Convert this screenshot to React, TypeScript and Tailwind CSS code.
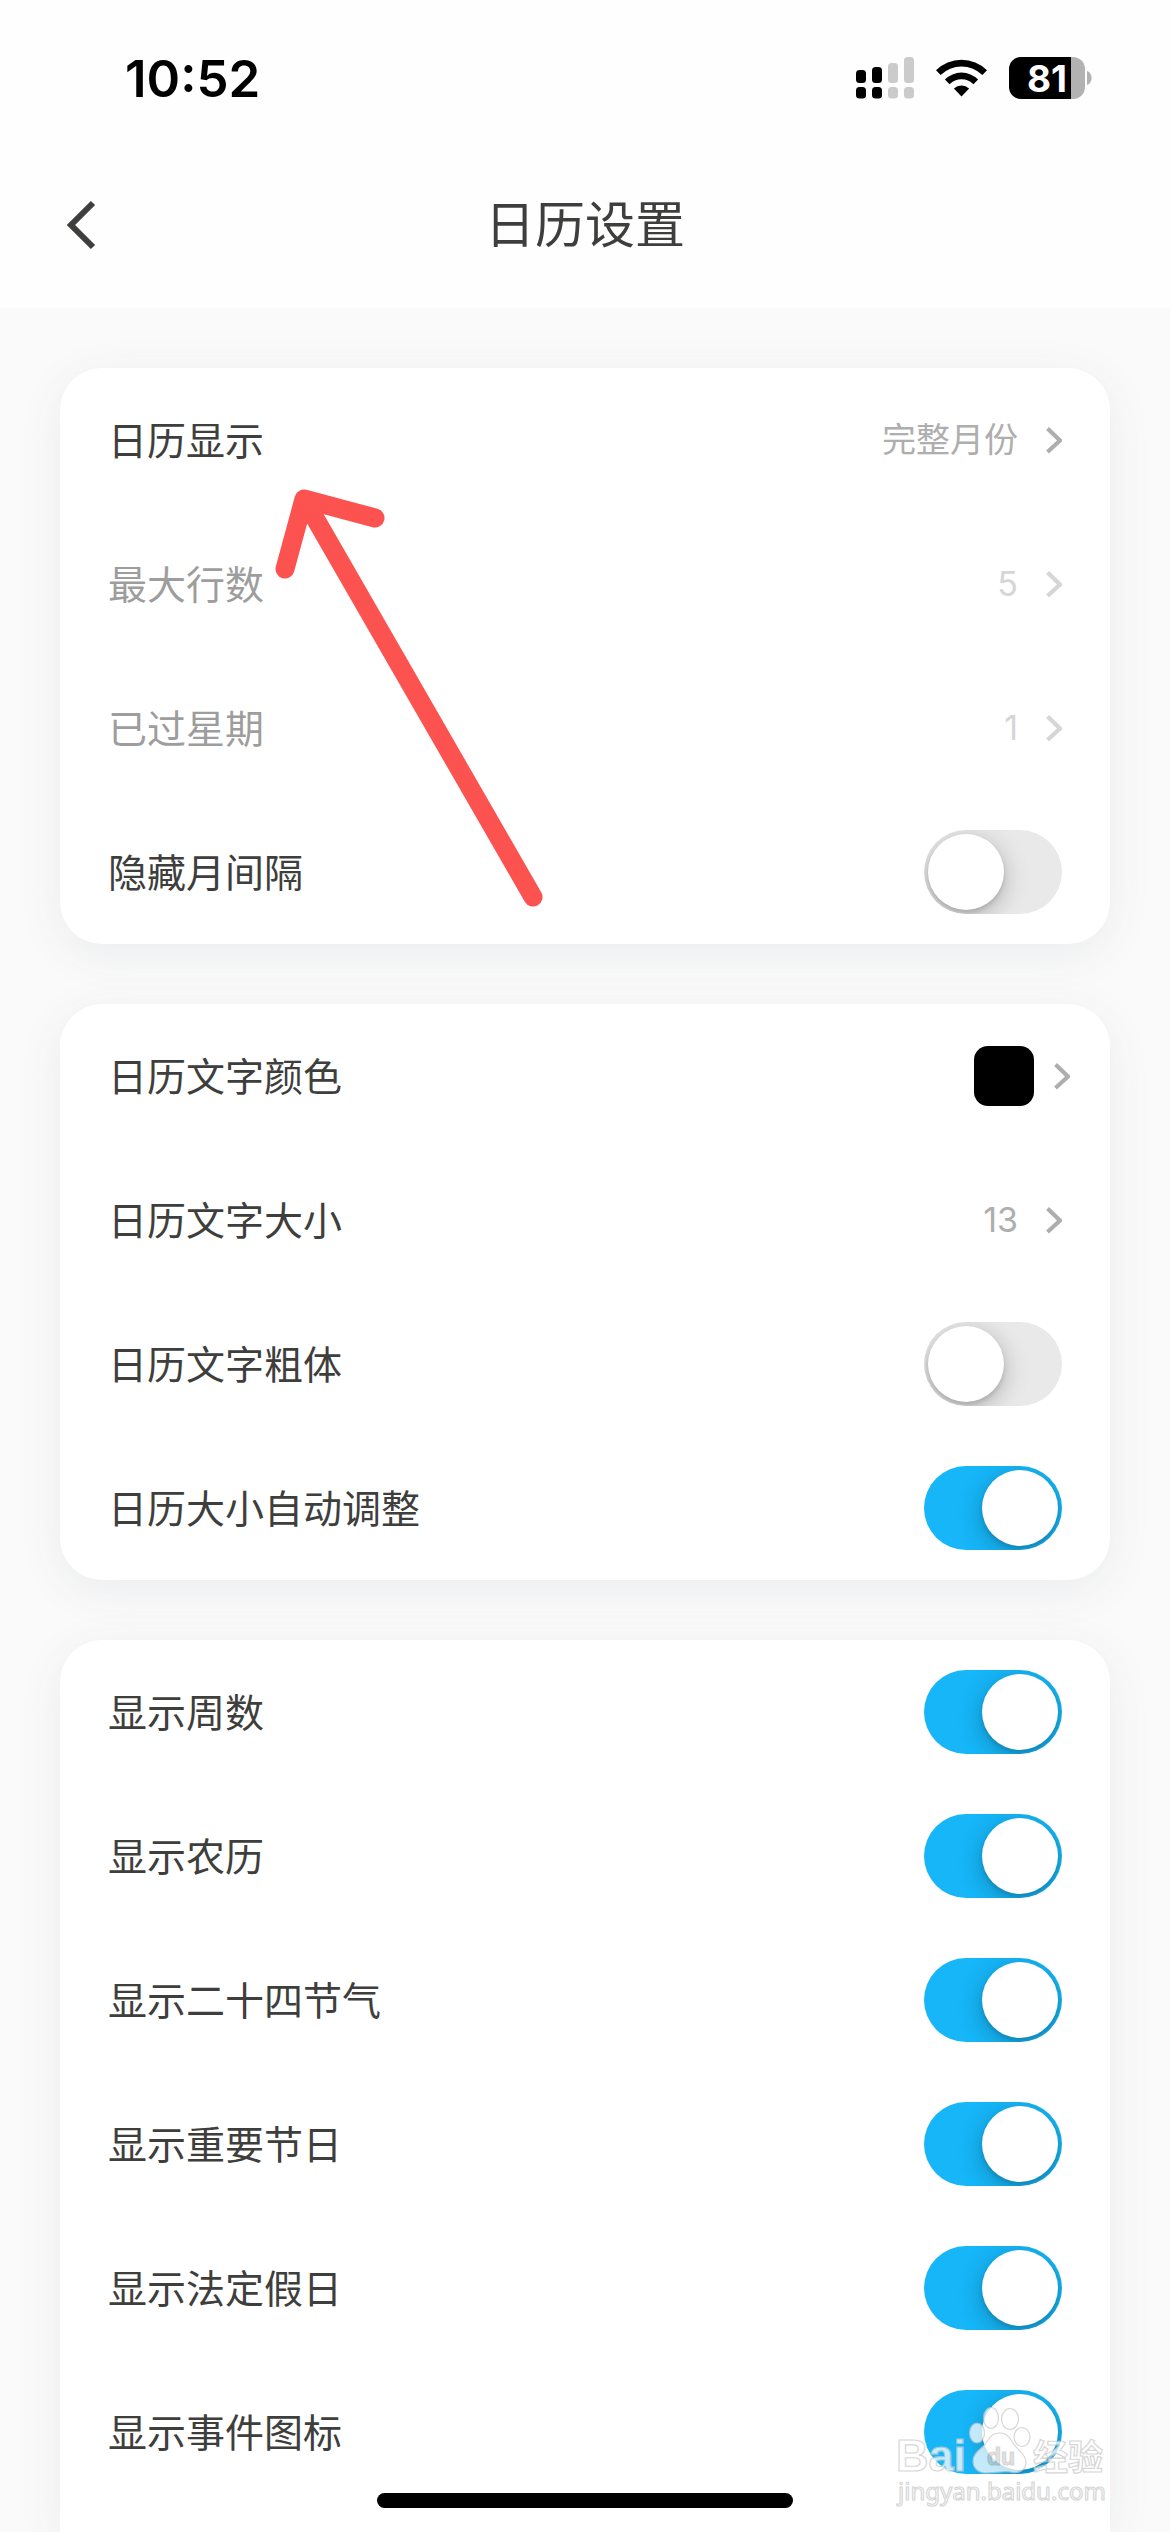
import { ReactNode, useState } from 'react';

interface ToggleRowProps {
  label: string;
  defaultOn?: boolean;
}

interface LinkRowProps {
  label: string;
  value: ReactNode;
  disabled?: boolean;
  wide?: boolean;
}

const DISPLAY_TOGGLES = [
  '显示周数',
  '显示农历',
  '显示二十四节气',
  '显示重要节日',
  '显示法定假日',
  '显示事件图标',
];

function ToggleRow({ label, defaultOn = false }: ToggleRowProps) {
  const [on, setOn] = useState(defaultOn);

  return (
    <label className="flex h-36 items-center justify-between px-12">
      <span>{label}</span>
      <input
        type="checkbox"
        role="switch"
        checked={on}
        onChange={(e) => setOn(e.target.checked)}
        className="h-[84px] w-[138px] shrink-0 cursor-pointer appearance-none overflow-hidden rounded-full bg-[#e9e9ea] p-1 before:block before:size-[76px] before:rounded-full before:bg-white before:shadow-[0_6px_24px_rgba(0,0,0,0.25),0_3px_4px_rgba(0,0,0,0.12)] before:content-[''] checked:bg-[#16b6f8] checked:before:ml-[54px]"
      />
    </label>
  );
}

function LinkRow({ label, value, disabled = false, wide = false }: LinkRowProps) {
  return (
    <button
      type="button"
      disabled={disabled}
      className={`flex h-36 w-full items-center justify-between pl-12 text-left disabled:opacity-50 ${wide ? 'pr-10' : 'pr-12'}`}
    >
      <span>{label}</span>
      <span className={`flex items-center text-[34px] text-[#aeaeae] ${wide ? 'gap-5' : 'gap-7'}`}>
        {value}
        <svg className="h-7 w-4" viewBox="0 0 16 28" fill="none" stroke="currentColor" strokeWidth="4.2">
          <path d="M1.500 2.500 14 14.500 1.500 26" />
        </svg>
      </span>
    </button>
  );
}

function StatusBar() {
  return (
    <div className="flex h-[156px] items-center justify-between pr-[78px] pl-[125px] text-black">
      <span className="text-[51px] leading-none font-semibold">10:52</span>
      <div className="flex items-center">
        {/* Dual SIM signal */}
        <svg className="mr-[22px] h-[42px] w-[58px]" viewBox="0 0 58 42">
          <g fill="#cbcbcb">
            <rect x="32" y="6" width="10" height="20" rx="3.5" />
            <rect x="48" width="10" height="26" rx="3.5" />
            <rect x="32" y="30" width="10" height="11.5" rx="3.5" />
            <rect x="48" y="30" width="10" height="11.5" rx="3.5" />
          </g>
          <rect y="13" width="10" height="13" rx="3.5" />
          <rect x="16" y="10" width="10" height="16" rx="3.5" />
          <rect y="30" width="10" height="11.5" rx="3.5" />
          <rect x="16" y="30" width="10" height="11.5" rx="3.5" />
        </svg>
        {/* Wi-Fi */}
        <svg className="mr-[22px] h-[38px] w-[51px]" viewBox="0 0 51 38">
          <path d="M0 11.2a36.5 36.5 0 0 1 51 0l-4.6 4.8a29.8 29.8 0 0 0-41.8 0z" />
          <path d="M8.9 20.4a23.7 23.7 0 0 1 33.2 0l-4.7 4.8a17 17 0 0 0-23.8 0z" />
          <path d="M17.9 29.6a10.9 10.9 0 0 1 15.2 0l-7.6 7.9z" />
        </svg>
        <div className="flex h-[42px] w-[76px] items-center justify-center rounded-xl bg-linear-to-r from-black from-81% to-[#b2b2b2] to-81% text-[37px] leading-none font-bold text-white">
          81
        </div>
        <svg className="ml-[2px] h-[14px] w-[5px]" viewBox="0 0 5 14" fill="#b2b2b2">
          <path d="M0 0c3 1 4.600 4 4.600 7S3 13 0 14z" />
        </svg>
      </div>
    </div>
  );
}

function PointerArrow() {
  return (
    <svg
      className="pointer-events-none absolute top-[116px] left-[210px] h-[428px] w-[280px]"
      viewBox="0 0 280 428"
      fill="none"
      stroke="#fc5350"
      strokeWidth="19"
      strokeLinecap="round"
      strokeLinejoin="round"
    >
      <path d="M15 85 34 15 105 34M34 15 263 413" />
    </svg>
  );
}

function Watermark() {
  return (
    <div className="pointer-events-none absolute right-[60px] bottom-[22px] w-[214px] opacity-75" aria-hidden="true">
      <svg className="h-[110px] w-full" viewBox="0 0 214 110" fill="#fff" stroke="#cacaca" strokeWidth="1.2">
        {/* Paw */}
        <ellipse cx="81" cy="33" rx="7.5" ry="10" />
        <ellipse cx="95" cy="18" rx="7.5" ry="10.5" />
        <ellipse cx="114" cy="19" rx="8.5" ry="10.5" />
        <ellipse cx="126" cy="37" rx="8" ry="9.5" />
        <path d="M104 33c-8 0-11 5-14 10-4 6-13 9-13 18 0 8 6 12 13 12 8 0 16-2 24-1 8 2 16-1 16-10 0-8-9-12-13-19-3-5-6-10-13-10z" />
        <g fontFamily="'Liberation Sans', 'Noto Sans CJK SC', sans-serif" fontWeight="700">
          <text x="0" y="71" fontSize="45">Bai</text>
          <text x="91" y="65" fontSize="23" fill="#d8d8d8">du</text>
          <text x="137" y="70" fontSize="35">经验</text>
        </g>
        <text x="2" y="100" fontSize="24" fontFamily="'Noto Sans', sans-serif">jingyan.baidu.com</text>
      </svg>
    </div>
  );
}

const card = 'relative bg-white shadow-[0_10px_45px_rgba(60,80,100,0.08)]';

export default function App() {
  return (
    <div className="relative flex min-h-screen flex-col overflow-hidden bg-[#fafafa] font-[Inter,'Noto_Sans_CJK_SC',sans-serif] text-[39px] leading-none text-[#3e3e3d]">
      <header className="bg-[#fefefe]">
        <StatusBar />
        <div className="grid h-[152px] grid-cols-[1fr_auto_1fr] items-center pb-[14px]">
          <button type="button" aria-label="返回" className="ml-[66px] w-[30px]">
            <svg className="h-[50px] w-[30px]" viewBox="0 0 30 50" fill="none" stroke="currentColor" strokeWidth="6">
              <path d="M27 3 5 25l22 22" />
            </svg>
          </button>
          <h1 className="text-[50px]">日历设置</h1>
        </div>
      </header>

      <main className="flex flex-1 flex-col gap-15 px-15 pt-15">
        <section className={`${card} rounded-[42px]`}>
          <LinkRow label="日历显示" value="完整月份" />
          <LinkRow label="最大行数" value="5" disabled />
          <LinkRow label="已过星期" value="1" disabled />
          <ToggleRow label="隐藏月间隔" />
          <PointerArrow />
        </section>

        <section className={`${card} rounded-[42px]`}>
          <LinkRow
            label="日历文字颜色"
            value={<span className="size-15 rounded-[14px] bg-black" />}
            wide
          />
          <LinkRow label="日历文字大小" value="13" />
          <ToggleRow label="日历文字粗体" />
          <ToggleRow label="日历大小自动调整" defaultOn />
        </section>

        <section className={`${card} flex-1 rounded-t-[42px]`}>
          {DISPLAY_TOGGLES.map((label) => (
            <ToggleRow key={label} label={label} defaultOn />
          ))}
        </section>
      </main>

      <Watermark />
      <div className="absolute inset-x-0 bottom-6 flex justify-center">
        <div className="h-[15px] w-[416px] rounded-full bg-black" />
      </div>
    </div>
  );
}
